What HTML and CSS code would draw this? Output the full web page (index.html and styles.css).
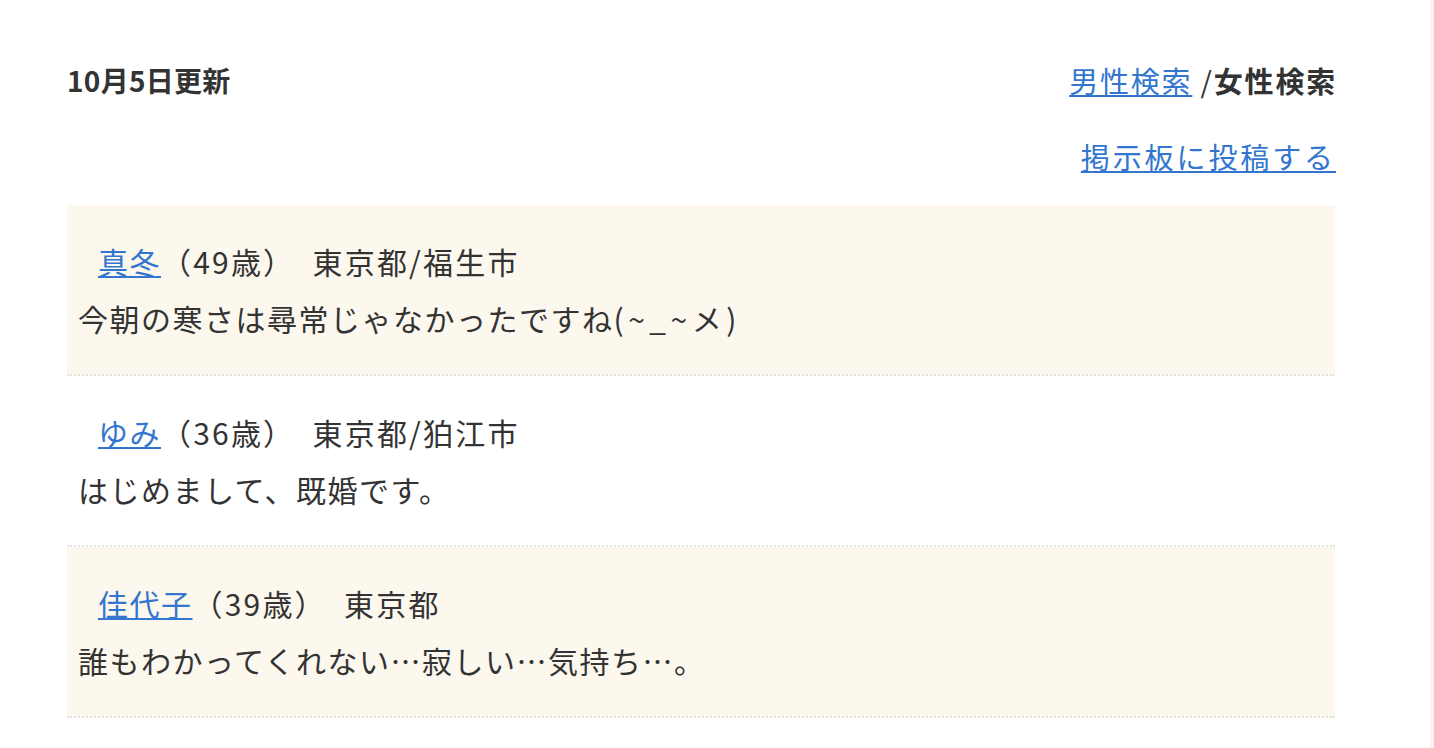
FILE: index.html
```html
<!DOCTYPE html>
<html lang="ja">
<head>
<meta charset="utf-8">
<link rel="stylesheet" href="styles.css">
</head>
<body>
<div class="page">
  <main class="content">
    <div class="top">
      <h2 class="date">10月5日更新</h2>
      <div class="search"><a href="#">男性検索</a> /<strong>女性検索</strong></div>
    </div>
    <div class="post"><a href="#">掲示板に投稿する</a></div>
    <ul class="list">
      <li class="item alt">
        <p class="who"><a href="#">真冬</a>（49歳）　東京都/福生市</p>
        <p class="msg">今朝の寒さは尋常じゃなかったですね<span class="kao">(~_~メ)</span></p>
      </li>
      <li class="item">
        <p class="who"><a href="#">ゆみ</a>（36歳）　東京都/狛江市</p>
        <p class="msg">はじめまして、既婚です。</p>
      </li>
      <li class="item alt">
        <p class="who"><a href="#">佳代子</a>（39歳）　東京都</p>
        <p class="msg">誰もわかってくれない…寂しい…気持ち…。</p>
      </li>
    </ul>
  </main>
  <div class="edge"></div>
</div>
</body>
</html>
```
FILE: styles.css
```css
html, body {
  margin: 0;
  padding: 0;
  background: #fff;
}
body {
  font-family: "Noto Sans CJK JP", "Noto Sans", sans-serif;
  color: #333;
}
.page {
  display: flex;
  min-height: 748px;
}
.content {
  width: 1268px;
  padding: 58px 0 0 67px;
}
.edge {
  margin-left: auto;
  width: 4px;
  background: #fcf2f1;
}
a {
  color: #3276d0;
  text-decoration: underline;
  text-underline-offset: 2px;
  text-decoration-thickness: 2px;
}
.top {
  display: flex;
  justify-content: space-between;
  align-items: center;
  line-height: 44px;
}
.date {
  margin: 0;
  font-size: 28px;
  font-weight: 700;
  letter-spacing: 0.3px;
}
.search {
  font-size: 29px;
  letter-spacing: 1.8px;
  margin-right: -2px;
}
.search strong {
  font-weight: 700;
}
.post {
  text-align: right;
  font-size: 29px;
  line-height: 44px;
  letter-spacing: 2.9px;
  margin-top: 32px;
  margin-right: -1px;
}
.list {
  list-style: none;
  margin: 27px 0 0;
  padding: 0;
}
.item {
  padding: 28px 11px 27px;
  border-bottom: 2px dotted #e3e3e3;
  font-size: 30px;
  letter-spacing: 1.5px;
  line-height: 57px;
}
.item.alt {
  background: #fcf8ee;
}
.who, .msg {
  margin: 0;
}
.who {
  padding-left: 20px;
  letter-spacing: 2.2px;
}
.who a {
  letter-spacing: 1.5px;
}
.kao {
  letter-spacing: 4.5px;
}
```
